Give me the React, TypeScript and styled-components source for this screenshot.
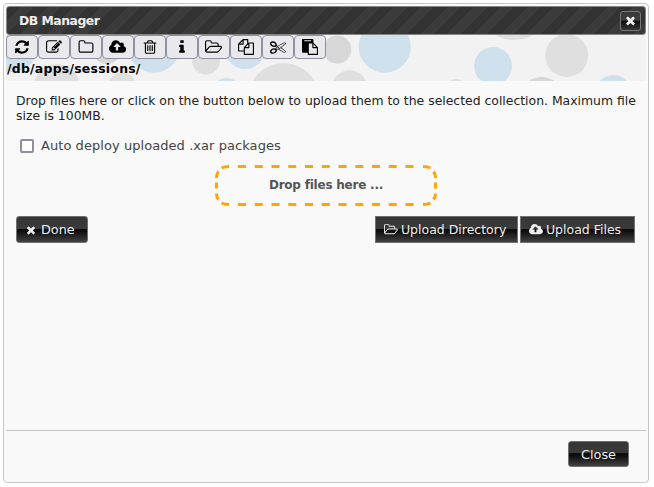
import React from "react";
import styled, { createGlobalStyle } from "styled-components";

const GlobalStyle = createGlobalStyle`
  * { box-sizing: border-box; }
  body {
    margin: 0;
    background: #fff;
    font-family: "DejaVu Sans", sans-serif;
    font-size: 13px;
    line-height: 15px;
    color: #222;
  }
  button { font-family: inherit; margin: 0; }
`;

const ICONS = {
  refresh: "M1639 1056q0 5-1 7-64 268-268 434.5t-478 166.5q-146 0-282.5-55t-243.5-157l-129 129q-19 19-45 19t-45-19-19-45v-448q0-26 19-45t45-19h448q26 0 45 19t19 45-19 45l-137 137q71 66 161 102t187 36q134 0 250-65t186-179q11-17 53-117 8-23 30-23h192q13 0 22.5 9.5t9.5 22.5zm25-800v448q0 26-19 45t-45 19h-448q-26 0-45-19t-19-45 19-45l138-138q-148-137-349-137-134 0-250 65t-186 179q-11 17-53 117-8 23-30 23h-199q-13 0-22.5-9.5t-9.5-22.5v-7q65-268 270-434.5t480-166.5q146 0 284 55.5t245 156.5l130-129q19-19 45-19t45 19 19 45z",
  edit: "M888 1184l116-116-152-152-116 116v56h96v96h56zm440-720q-16-16-33 1l-350 350q-17 17-1 33t33-1l350-350q17-17 1-33zm80 594v190q0 119-84.5 203.5t-203.5 84.5h-832q-119 0-203.5-84.5t-84.5-203.5v-832q0-119 84.5-203.5t203.5-84.5h832q63 0 117 25 15 7 18 23 3 17-9 29l-49 49q-14 14-32 8-23-6-45-6h-832q-66 0-113 47t-47 113v832q0 66 47 113t113 47h832q66 0 113-47t47-113v-126q0-13 9-22l64-64q15-15 35-7t20 29zm-96-738l288 288-672 672h-288v-288zm444 132l-92 92-288-288 92-92q28-28 68-28t68 28l152 152q28 28 28 68t-28 68z",
  folder: "M1600 1312v-704q0-40-28-68t-68-28h-704q-40 0-68-28t-28-68v-64q0-40-28-68t-68-28h-320q-40 0-68 28t-28 68v960q0 40 28 68t68 28h1216q40 0 68-28t28-68zm128-704v704q0 92-66 158t-158 66h-1216q-92 0-158-66t-66-158v-960q0-92 66-158t158-66h320q92 0 158 66t66 158v32h672q92 0 158 66t66 158z",
  upload: "M1344 864q0-14-9-23l-352-352q-9-9-23-9t-23 9l-351 351q-10 12-10 24 0 14 9 23t23 9h224v352q0 13 9.5 22.5t22.5 9.5h192q13 0 22.5-9.5t9.5-22.5v-352h224q13 0 22.5-9.5t9.5-22.5zm640 288q0 159-112.5 271.5t-271.5 112.5h-1088q-185 0-316.5-131.5t-131.5-316.5q0-130 70-240t188-165q-2-30-2-43 0-212 150-362t362-150q156 0 285.5 87t188.5 231q71-62 166-62 106 0 181 75t75 181q0 76-41 138 130 31 213.5 135.5t83.5 238.5z",
  trash: "M704 736v576q0 14-9 23t-23 9h-64q-14 0-23-9t-9-23v-576q0-14 9-23t23-9h64q14 0 23 9t9 23zm256 0v576q0 14-9 23t-23 9h-64q-14 0-23-9t-9-23v-576q0-14 9-23t23-9h64q14 0 23 9t9 23zm256 0v576q0 14-9 23t-23 9h-64q-14 0-23-9t-9-23v-576q0-14 9-23t23-9h64q14 0 23 9t9 23zm128 724v-948h-896v948q0 22 7 40.5t14.5 27 10.5 8.5h832q3 0 10.5-8.5t14.5-27 7-40.5zm-672-1076h448l-48-117q-7-9-17-11h-317q-10 2-17 11zm928 32v64q0 14-9 23t-23 9h-96v948q0 83-47 143.5t-113 60.5h-832q-66 0-113-58.5t-47-141.5v-952h-96q-14 0-23-9t-9-23v-64q0-14 9-23t23-9h309l70-167q15-37 54-63t79-26h320q40 0 79 26t54 63l70 167h309q14 0 23 9t9 23z",
  info: "M1216 1344v128q0 26-19 45t-45 19h-512q-26 0-45-19t-19-45v-128q0-26 19-45t45-19h64v-384h-64q-26 0-45-19t-19-45v-128q0-26 19-45t45-19h384q26 0 45 19t19 45v576h64q26 0 45 19t19 45zm-128-1152v192q0 26-19 45t-45 19h-256q-26 0-45-19t-19-45v-192q0-26 19-45t45-19h256q26 0 45 19t19 45z",
  open: "M1845 931q0-35-53-35h-1088q-40 0-85.5 21.5t-71.5 52.5l-294 363q-18 24-18 40 0 35 53 35h1088q40 0 86-22t71-53l294-363q18-22 18-39zm-1141-163h768v-160q0-40-28-68t-68-28h-576q-40 0-68-28t-28-68v-64q0-40-28-68t-68-28h-320q-40 0-68 28t-28 68v853l256-315q44-53 116-87.5t140-34.5zm1269 163q0 62-46 120l-295 363q-43 53-116 87.5t-140 34.5h-1088q-92 0-158-66t-66-158v-960q0-92 66-158t158-66h320q92 0 158 66t66 158v32h544q92 0 158 66t66 158v160h192q54 0 99 24.5t67 70.5q15 32 15 68z",
  copy: "M1696 384q40 0 68 28t28 68v1216q0 40-28 68t-68 28h-960q-40 0-68-28t-28-68v-288h-544q-40 0-68-28t-28-68v-672q0-40 20-88t48-76l408-408q28-28 76-48t88-20h416q40 0 68 28t28 68v328q68-40 128-40h416zm-544 213l-299 299h299v-299zm-640-384l-299 299h299v-299zm196 647l316-316v-416h-384v416q0 40-28 68t-68 28h-416v640h512v-256q0-40 20-88t48-76zm956 804v-1152h-384v416q0 40-28 68t-68 28h-416v640h896z",
  cut: "M960 896q26 0 45 19t19 45-19 45-45 19-45-19-19-45 19-45 45-19zm300 64l507 398q28 20 25 56-5 35-35 51l-128 64q-13 7-29 7-17 0-31-8l-690-387-110 66q-8 4-12 5 14 49 10 97-7 77-56 147.5t-132 123.5q-132 84-277 84-136 0-222-78-90-84-79-207 7-76 56-147t131-124q132-84 278-84 83 0 151 31 9-13 22-22l122-73-122-73q-13-9-22-22-68 31-151 31-146 0-278-84-82-53-131-124t-56-147q-5-59 15.5-113t63.5-93q85-79 222-79 145 0 277 84 83 52 132 123t56 148q4 48-10 97 4 1 12 5l110 66 690-387q14-8 31-8 16 0 29 7l128 64q30 16 35 51 3 36-25 56zm-681-260q46-42 21-108t-106-117q-92-59-192-59-74 0-113 36-46 42-21 108t106 117q92 59 192 59 74 0 113-36zm-85 745q81-51 106-117t-21-108q-39-36-113-36-100 0-192 59-81 51-106 117t21 108q39 36 113 36 100 0 192-59zm178-613l96 58v-11q0-36 33-56l14-8-79-44-26 26q-3 3-10 11t-12 12q-2 2-4 3.5t-3 2.5zm224 224l96 32 736-576-128-64-768 431v113l-160 96 9 8q2 2 7 6 4 4 11 12t11 12l26 26zm704 416l128-64-520-408-177 138q-2 3-13 7z",
  paste: "M768 1664h896v-640h-416q-40 0-68-28t-28-68v-416h-384v1152zm256-1440v-64q0-13-9.5-22.5t-22.5-9.5h-704q-13 0-22.5 9.5t-9.5 22.5v64q0 13 9.5 22.5t22.5 9.5h704q13 0 22.5-9.5t9.5-22.5zm256 672h299l-299-299v299zm512 128v672q0 40-28 68t-68 28h-960q-40 0-68-28t-28-68v-160h-544q-40 0-68-28t-28-68v-1344q0-40 28-68t68-28h1088q40 0 68 28t28 68v328q21 13 36 28l408 408q28 28 48 76t20 88z",
  times: "M1490 1322q0 40-28 68l-136 136q-28 28-68 28t-68-28l-294-294-294 294q-28 28-68 28t-68-28l-136-136q-28-28-28-68t28-68l294-294-294-294q-28-28-28-68t28-68l136-136q28-28 68-28t68 28l294 294 294-294q28-28 68-28t68 28l136 136q28 28 28 68t-28 68l-294 294 294 294q28 28 28 68z",
};

type IconName = keyof typeof ICONS;
const WIDE: IconName[] = ["upload", "open"];

const Svg = styled.svg`
  display: block;
  flex: none;
  fill: currentColor;
`;

function Icon({ name, size = 16 }: { name: IconName; size?: number }) {
  const wide = WIDE.includes(name);
  return (
    <Svg
      width={wide ? (size * 1920) / 1792 : size}
      height={size}
      viewBox={wide ? "64 0 1920 1792" : "0 0 1792 1792"}
    >
      <path d={ICONS[name]} />
    </Svg>
  );
}

const Dialog = styled.div`
  width: 646px;
  height: 480px;
  margin: 3px;
  padding: 2px;
  border: 1px solid #c8c8c8;
  border-radius: 4px;
  background: #f9f9f9;
  display: flex;
  flex-direction: column;
`;

const TitleBar = styled.header`
  height: 29px;
  flex: none;
  display: flex;
  align-items: center;
  justify-content: space-between;
  padding: 0 4px 0 12px;
  border: 1px solid #858585;
  border-radius: 3px;
  background: repeating-linear-gradient(135deg, #333 0 9.43px, #3b3b3b 9.43px 18.86px);
  color: #eee;
  font-weight: bold;
`;

const Title = styled.span`
  font-size: 12.4px;
  letter-spacing: -0.5px;
`;

const glossy = "linear-gradient(#363636 0, #3a3a3a 47%, #0c0c0c 48%, #101010 58%, #414141 100%)";

const CloseIcon = styled.button`
  width: 21px;
  height: 20px;
  padding: 0;
  display: grid;
  place-items: center;
  border: 1px solid #777;
  border-radius: 3px;
  background: linear-gradient(#3a3a3a 0 47%, #0c0c0c 48%, #363636);
  color: #eee;
`;

const Toolbar = styled.div`
  position: relative;
  height: 46px;
  flex: none;
  overflow: hidden;
  background: #f2f2f2;
`;

const Dots = styled.svg`
  position: absolute;
  inset: 0;
`;

const Tools = styled.div`
  position: relative;
  display: flex;
`;

const Tool = styled.button`
  width: 32px;
  height: 24px;
  padding: 0;
  display: grid;
  place-items: center;
  border: 1px solid #8f8f9d;
  border-radius: 4px;
  background: #e9e9ed;
  color: #000;
`;

const Path = styled.div`
  position: relative;
  padding: 2px 0 0 1px;
  color: #000;
  font-size: 12.4px;
  letter-spacing: 0.27px;
  font-weight: bold;
`;

const Body = styled.main`
  flex: 1;
  padding: 12px 9px 0 10px;
`;

const Message = styled.p`
  margin: 0;
  font-size: 12.42px;
  white-space: nowrap;
`;

const Option = styled.label`
  display: flex;
  align-items: center;
  gap: 7px;
  height: 15px;
  margin: 15px 0 12px 4px;
  color: #444;
  letter-spacing: 0.06px;
`;

const Checkbox = styled.input`
  appearance: none;
  width: 14px;
  height: 14px;
  margin: 0;
  border: 2px solid #8f8f9d;
  border-radius: 2px;
  background: #fff;
`;

const DropZone = styled.div`
  position: relative;
  width: 222px;
  height: 41px;
  margin: 0 0 10px 199px;
  display: grid;
  place-items: center;
  color: #555;
  font-size: 12px;
  letter-spacing: -0.22px;
  font-weight: bold;
`;

const DropOutline = styled.svg`
  position: absolute;
  inset: 0;
  fill: none;
  stroke: orange;
  stroke-width: 3;
`;

const Actions = styled.div`
  display: flex;
  justify-content: space-between;
  padding-right: 2px;
`;

const UploadGroup = styled.div`
  display: flex;
  gap: 2px;
`;

const Button = styled.button<{ $width: number; $height?: number; $square?: boolean }>`
  width: ${(p) => p.$width}px;
  height: ${(p) => p.$height ?? 27}px;
  padding: 0 0 0 8px;
  display: flex;
  align-items: center;
  gap: ${(p) => (p.$square ? 3 : 4)}px;
  border: 1px solid #717171;
  border-radius: ${(p) => (p.$square ? 0 : 3)}px;
  background: ${glossy};
  color: #eee;
  font-size: ${(p) => (p.$square ? 12.5 : 12.8)}px;
  white-space: nowrap;
`;

const Footer = styled.footer`
  height: 50px;
  flex: none;
  display: flex;
  justify-content: flex-end;
  padding: 10px 17px 0;
  border-top: 1px solid #c8c8c8;
`;

const CloseButton = styled(Button)`
  padding: 0;
  justify-content: center;
`;

const BLUE = "#cfe1ed";
const GREY = "#dfdfdf";
const DARK = "#d7d7d7";

const CIRCLES: [number, number, number, string][] = [
  [12, 46, 26, BLUE],
  [107, 50, 14, DARK],
  [57, 87, 23, GREY],
  [122, 88, 15, GREY],
  [154, 46.7, 26, BLUE],
  [206, 60.5, 14, GREY],
  [245, 48.7, 20.3, BLUE],
  [226.5, 94, 16, BLUE],
  [283.5, 98.4, 35.4, GREY],
  [337.3, 49.5, 14, DARK],
  [349.5, 88, 17.7, GREY],
  [384.7, 46.7, 26, BLUE],
  [456, 89, 10, GREY],
  [493, 66, 19, BLUE],
  [514.5, 3, 37, GREY],
  [566.7, 55.5, 21.5, GREY],
  [541.5, 100, 23, DARK],
  [613.5, 94, 19, BLUE],
];

const DASHES = Array.from({ length: 11 }, (_, i) => 23 + i * 16.75);

const TOOLS: { name: IconName; label: string }[] = [
  { name: "refresh", label: "Refresh" },
  { name: "edit", label: "Edit" },
  { name: "folder", label: "New collection" },
  { name: "upload", label: "Upload" },
  { name: "trash", label: "Delete" },
  { name: "info", label: "Properties" },
  { name: "open", label: "Open" },
  { name: "copy", label: "Copy" },
  { name: "cut", label: "Cut" },
  { name: "paste", label: "Paste" },
];

export default function App() {
  return (
    <>
      <GlobalStyle />
      <Dialog>
        <TitleBar>
          <Title>DB Manager</Title>
          <CloseIcon aria-label="Close dialog">
            <Icon name="times" size={13} />
          </CloseIcon>
        </TitleBar>
        <Toolbar>
          <Dots width="640" height="46" viewBox="6 35 640 46">
            {CIRCLES.map(([cx, cy, r, fill]) => (
              <circle key={cx} cx={cx} cy={cy} r={r} fill={fill} />
            ))}
          </Dots>
          <Tools>
            {TOOLS.map((t) => (
              <Tool key={t.name} aria-label={t.label}>
                <Icon name={t.name} />
              </Tool>
            ))}
          </Tools>
          <Path>/db/apps/sessions/</Path>
        </Toolbar>
        <Body>
          <Message>
            Drop files here or click on the button below to upload them to the selected collection. Maximum file
            <br />
            size is 100MB.
          </Message>
          <Option>
            <Checkbox type="checkbox" />
            Auto deploy uploaded .xar packages
          </Option>
          <DropZone>
            <DropOutline width="222" height="41" viewBox="0 0 222 41">
              {DASHES.map((x) => (
                <path key={x} d={`M${x} 1.5h8M${x} 39.5h8`} />
              ))}
              <path d="M1.5 17.5v6M220.5 17.5v6" />
              <path d="M6.5 3q3-1.5 7.5-1.5M215.5 3q-3-1.5-7.5-1.5M6.5 38q3 1.5 7.5 1.5M215.5 38q-3 1.5-7.5 1.5" />
              <path d="M1.5 13q0-4 2-6.5M220.5 13q0-4-2-6.5M1.5 28.5q0 4 2 6M220.5 28.5q0 4-2 6" />
            </DropOutline>
            Drop files here ...
          </DropZone>
          <Actions>
            <Button $width={72}>
              <Icon name="times" size={12} />
              Done
            </Button>
            <UploadGroup>
              <Button $width={143} $square>
                <Icon name="open" size={13} />
                Upload Directory
              </Button>
              <Button $width={115} $square>
                <Icon name="upload" size={13} />
                Upload Files
              </Button>
            </UploadGroup>
          </Actions>
        </Body>
        <Footer>
          <CloseButton $width={61} $height={26}>Close</CloseButton>
        </Footer>
      </Dialog>
    </>
  );
}
